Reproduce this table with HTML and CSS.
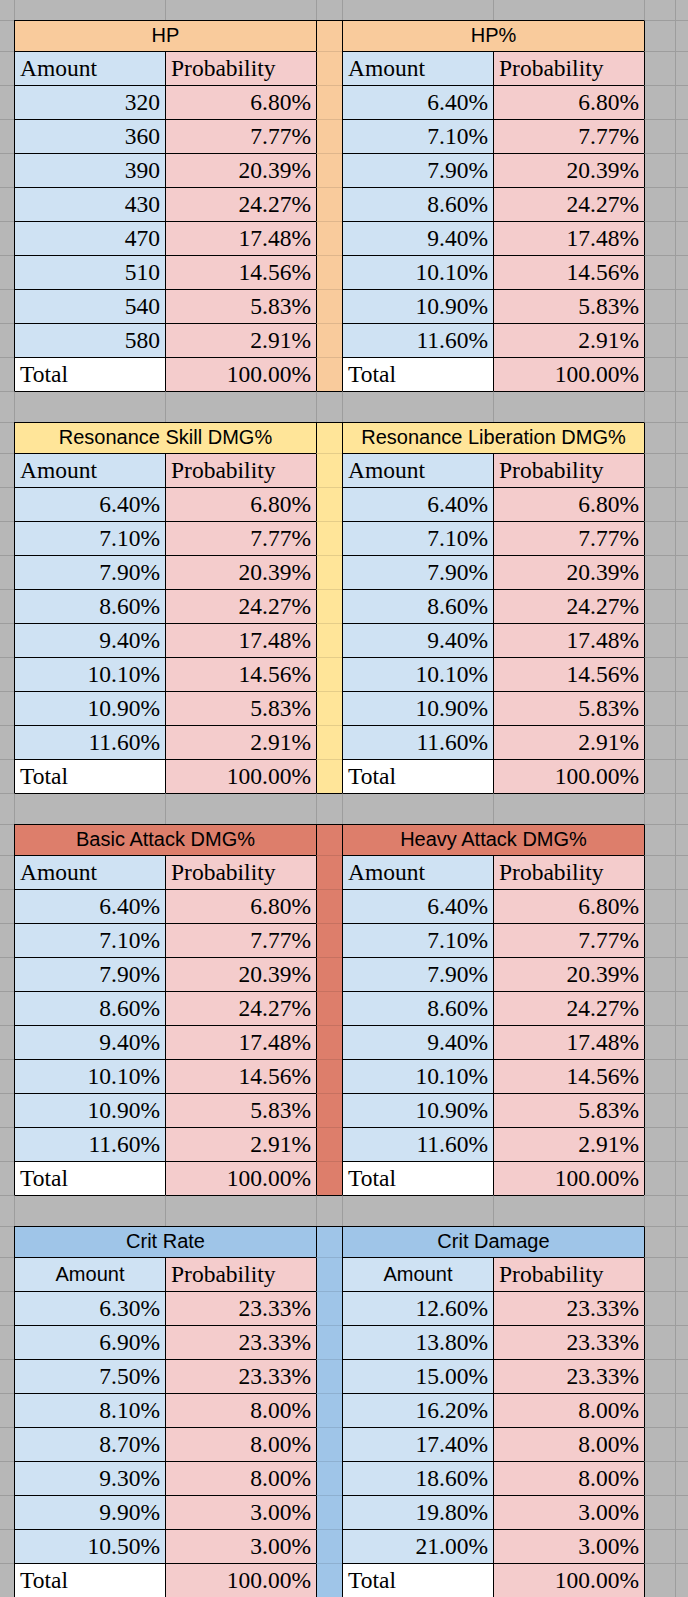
FILE: index.html
```html
<!DOCTYPE html>
<html lang="en">
<head>
<meta charset="utf-8">
<title>Echo substat probabilities</title>
<link rel="stylesheet" href="styles.css">
</head>
<body>
<div class="sheet">
  <div class="row top"><div class="c ca"></div><div class="c cb"></div><div class="c cc"></div><div class="c cd"></div><div class="c ce"></div><div class="c cf"></div><div class="c cg"></div><div class="c ch"></div></div>

  <!-- Block 1 -->
  <div class="block orange">
    <div class="row hd"><div class="c ca"></div><div class="c span t hdc">HP</div><div class="c cd sep"></div><div class="c span t hdc">HP%</div><div class="c cg edge"></div><div class="c ch"></div></div>
    <div class="row"><div class="c ca"></div><div class="c cb t am s">Amount</div><div class="c cc t pr s">Probability</div><div class="c cd sep"></div><div class="c ce t am s">Amount</div><div class="c cf t pr s">Probability</div><div class="c cg edge"></div><div class="c ch"></div></div>
    <div class="row"><div class="c ca"></div><div class="c cb t am n">320</div><div class="c cc t pr n">6.80%</div><div class="c cd sep"></div><div class="c ce t am n">6.40%</div><div class="c cf t pr n">6.80%</div><div class="c cg edge"></div><div class="c ch"></div></div>
    <div class="row"><div class="c ca"></div><div class="c cb t am n">360</div><div class="c cc t pr n">7.77%</div><div class="c cd sep"></div><div class="c ce t am n">7.10%</div><div class="c cf t pr n">7.77%</div><div class="c cg edge"></div><div class="c ch"></div></div>
    <div class="row"><div class="c ca"></div><div class="c cb t am n">390</div><div class="c cc t pr n">20.39%</div><div class="c cd sep"></div><div class="c ce t am n">7.90%</div><div class="c cf t pr n">20.39%</div><div class="c cg edge"></div><div class="c ch"></div></div>
    <div class="row"><div class="c ca"></div><div class="c cb t am n">430</div><div class="c cc t pr n">24.27%</div><div class="c cd sep"></div><div class="c ce t am n">8.60%</div><div class="c cf t pr n">24.27%</div><div class="c cg edge"></div><div class="c ch"></div></div>
    <div class="row"><div class="c ca"></div><div class="c cb t am n">470</div><div class="c cc t pr n">17.48%</div><div class="c cd sep"></div><div class="c ce t am n">9.40%</div><div class="c cf t pr n">17.48%</div><div class="c cg edge"></div><div class="c ch"></div></div>
    <div class="row"><div class="c ca"></div><div class="c cb t am n">510</div><div class="c cc t pr n">14.56%</div><div class="c cd sep"></div><div class="c ce t am n">10.10%</div><div class="c cf t pr n">14.56%</div><div class="c cg edge"></div><div class="c ch"></div></div>
    <div class="row"><div class="c ca"></div><div class="c cb t am n">540</div><div class="c cc t pr n">5.83%</div><div class="c cd sep"></div><div class="c ce t am n">10.90%</div><div class="c cf t pr n">5.83%</div><div class="c cg edge"></div><div class="c ch"></div></div>
    <div class="row"><div class="c ca"></div><div class="c cb t am n">580</div><div class="c cc t pr n">2.91%</div><div class="c cd sep"></div><div class="c ce t am n">11.60%</div><div class="c cf t pr n">2.91%</div><div class="c cg edge"></div><div class="c ch"></div></div>
    <div class="row"><div class="c ca"></div><div class="c cb t wh s">Total</div><div class="c cc t pr n">100.00%</div><div class="c cd sep"></div><div class="c ce t wh s">Total</div><div class="c cf t pr n">100.00%</div><div class="c cg edge"></div><div class="c ch"></div></div>
    <div class="row gap"><div class="c ca"></div><div class="c cb cl"></div><div class="c cc cl"></div><div class="c cd cl"></div><div class="c ce cl"></div><div class="c cf cl"></div><div class="c cg"></div><div class="c ch"></div></div>
  </div>

  <!-- Block 2 -->
  <div class="block yellow">
    <div class="row hd"><div class="c ca"></div><div class="c span t hdc">Resonance Skill DMG%</div><div class="c cd sep"></div><div class="c span t hdc">Resonance Liberation DMG%</div><div class="c cg edge"></div><div class="c ch"></div></div>
    <div class="row"><div class="c ca"></div><div class="c cb t am s">Amount</div><div class="c cc t pr s">Probability</div><div class="c cd sep"></div><div class="c ce t am s">Amount</div><div class="c cf t pr s">Probability</div><div class="c cg edge"></div><div class="c ch"></div></div>
    <div class="row"><div class="c ca"></div><div class="c cb t am n">6.40%</div><div class="c cc t pr n">6.80%</div><div class="c cd sep"></div><div class="c ce t am n">6.40%</div><div class="c cf t pr n">6.80%</div><div class="c cg edge"></div><div class="c ch"></div></div>
    <div class="row"><div class="c ca"></div><div class="c cb t am n">7.10%</div><div class="c cc t pr n">7.77%</div><div class="c cd sep"></div><div class="c ce t am n">7.10%</div><div class="c cf t pr n">7.77%</div><div class="c cg edge"></div><div class="c ch"></div></div>
    <div class="row"><div class="c ca"></div><div class="c cb t am n">7.90%</div><div class="c cc t pr n">20.39%</div><div class="c cd sep"></div><div class="c ce t am n">7.90%</div><div class="c cf t pr n">20.39%</div><div class="c cg edge"></div><div class="c ch"></div></div>
    <div class="row"><div class="c ca"></div><div class="c cb t am n">8.60%</div><div class="c cc t pr n">24.27%</div><div class="c cd sep"></div><div class="c ce t am n">8.60%</div><div class="c cf t pr n">24.27%</div><div class="c cg edge"></div><div class="c ch"></div></div>
    <div class="row"><div class="c ca"></div><div class="c cb t am n">9.40%</div><div class="c cc t pr n">17.48%</div><div class="c cd sep"></div><div class="c ce t am n">9.40%</div><div class="c cf t pr n">17.48%</div><div class="c cg edge"></div><div class="c ch"></div></div>
    <div class="row"><div class="c ca"></div><div class="c cb t am n">10.10%</div><div class="c cc t pr n">14.56%</div><div class="c cd sep"></div><div class="c ce t am n">10.10%</div><div class="c cf t pr n">14.56%</div><div class="c cg edge"></div><div class="c ch"></div></div>
    <div class="row"><div class="c ca"></div><div class="c cb t am n">10.90%</div><div class="c cc t pr n">5.83%</div><div class="c cd sep"></div><div class="c ce t am n">10.90%</div><div class="c cf t pr n">5.83%</div><div class="c cg edge"></div><div class="c ch"></div></div>
    <div class="row"><div class="c ca"></div><div class="c cb t am n">11.60%</div><div class="c cc t pr n">2.91%</div><div class="c cd sep"></div><div class="c ce t am n">11.60%</div><div class="c cf t pr n">2.91%</div><div class="c cg edge"></div><div class="c ch"></div></div>
    <div class="row"><div class="c ca"></div><div class="c cb t wh s">Total</div><div class="c cc t pr n">100.00%</div><div class="c cd sep"></div><div class="c ce t wh s">Total</div><div class="c cf t pr n">100.00%</div><div class="c cg edge"></div><div class="c ch"></div></div>
    <div class="row gap"><div class="c ca"></div><div class="c cb cl"></div><div class="c cc cl"></div><div class="c cd cl"></div><div class="c ce cl"></div><div class="c cf cl"></div><div class="c cg"></div><div class="c ch"></div></div>
  </div>

  <!-- Block 3 -->
  <div class="block red">
    <div class="row hd"><div class="c ca"></div><div class="c span t hdc">Basic Attack DMG%</div><div class="c cd sep"></div><div class="c span t hdc">Heavy Attack DMG%</div><div class="c cg edge"></div><div class="c ch"></div></div>
    <div class="row"><div class="c ca"></div><div class="c cb t am s">Amount</div><div class="c cc t pr s">Probability</div><div class="c cd sep"></div><div class="c ce t am s">Amount</div><div class="c cf t pr s">Probability</div><div class="c cg edge"></div><div class="c ch"></div></div>
    <div class="row"><div class="c ca"></div><div class="c cb t am n">6.40%</div><div class="c cc t pr n">6.80%</div><div class="c cd sep"></div><div class="c ce t am n">6.40%</div><div class="c cf t pr n">6.80%</div><div class="c cg edge"></div><div class="c ch"></div></div>
    <div class="row"><div class="c ca"></div><div class="c cb t am n">7.10%</div><div class="c cc t pr n">7.77%</div><div class="c cd sep"></div><div class="c ce t am n">7.10%</div><div class="c cf t pr n">7.77%</div><div class="c cg edge"></div><div class="c ch"></div></div>
    <div class="row"><div class="c ca"></div><div class="c cb t am n">7.90%</div><div class="c cc t pr n">20.39%</div><div class="c cd sep"></div><div class="c ce t am n">7.90%</div><div class="c cf t pr n">20.39%</div><div class="c cg edge"></div><div class="c ch"></div></div>
    <div class="row"><div class="c ca"></div><div class="c cb t am n">8.60%</div><div class="c cc t pr n">24.27%</div><div class="c cd sep"></div><div class="c ce t am n">8.60%</div><div class="c cf t pr n">24.27%</div><div class="c cg edge"></div><div class="c ch"></div></div>
    <div class="row"><div class="c ca"></div><div class="c cb t am n">9.40%</div><div class="c cc t pr n">17.48%</div><div class="c cd sep"></div><div class="c ce t am n">9.40%</div><div class="c cf t pr n">17.48%</div><div class="c cg edge"></div><div class="c ch"></div></div>
    <div class="row"><div class="c ca"></div><div class="c cb t am n">10.10%</div><div class="c cc t pr n">14.56%</div><div class="c cd sep"></div><div class="c ce t am n">10.10%</div><div class="c cf t pr n">14.56%</div><div class="c cg edge"></div><div class="c ch"></div></div>
    <div class="row"><div class="c ca"></div><div class="c cb t am n">10.90%</div><div class="c cc t pr n">5.83%</div><div class="c cd sep"></div><div class="c ce t am n">10.90%</div><div class="c cf t pr n">5.83%</div><div class="c cg edge"></div><div class="c ch"></div></div>
    <div class="row"><div class="c ca"></div><div class="c cb t am n">11.60%</div><div class="c cc t pr n">2.91%</div><div class="c cd sep"></div><div class="c ce t am n">11.60%</div><div class="c cf t pr n">2.91%</div><div class="c cg edge"></div><div class="c ch"></div></div>
    <div class="row"><div class="c ca"></div><div class="c cb t wh s">Total</div><div class="c cc t pr n">100.00%</div><div class="c cd sep"></div><div class="c ce t wh s">Total</div><div class="c cf t pr n">100.00%</div><div class="c cg edge"></div><div class="c ch"></div></div>
    <div class="row gap"><div class="c ca"></div><div class="c cb cl"></div><div class="c cc cl"></div><div class="c cd cl"></div><div class="c ce cl"></div><div class="c cf cl"></div><div class="c cg"></div><div class="c ch"></div></div>
  </div>

  <!-- Block 4 -->
  <div class="block blue">
    <div class="row hd"><div class="c ca"></div><div class="c span t hdc">Crit Rate</div><div class="c cd sep"></div><div class="c span t hdc">Crit Damage</div><div class="c cg edge"></div><div class="c ch"></div></div>
    <div class="row"><div class="c ca"></div><div class="c cb t am sc">Amount</div><div class="c cc t pr s">Probability</div><div class="c cd sep"></div><div class="c ce t am sc">Amount</div><div class="c cf t pr s">Probability</div><div class="c cg edge"></div><div class="c ch"></div></div>
    <div class="row"><div class="c ca"></div><div class="c cb t am n">6.30%</div><div class="c cc t pr n">23.33%</div><div class="c cd sep"></div><div class="c ce t am n">12.60%</div><div class="c cf t pr n">23.33%</div><div class="c cg edge"></div><div class="c ch"></div></div>
    <div class="row"><div class="c ca"></div><div class="c cb t am n">6.90%</div><div class="c cc t pr n">23.33%</div><div class="c cd sep"></div><div class="c ce t am n">13.80%</div><div class="c cf t pr n">23.33%</div><div class="c cg edge"></div><div class="c ch"></div></div>
    <div class="row"><div class="c ca"></div><div class="c cb t am n">7.50%</div><div class="c cc t pr n">23.33%</div><div class="c cd sep"></div><div class="c ce t am n">15.00%</div><div class="c cf t pr n">23.33%</div><div class="c cg edge"></div><div class="c ch"></div></div>
    <div class="row"><div class="c ca"></div><div class="c cb t am n">8.10%</div><div class="c cc t pr n">8.00%</div><div class="c cd sep"></div><div class="c ce t am n">16.20%</div><div class="c cf t pr n">8.00%</div><div class="c cg edge"></div><div class="c ch"></div></div>
    <div class="row"><div class="c ca"></div><div class="c cb t am n">8.70%</div><div class="c cc t pr n">8.00%</div><div class="c cd sep"></div><div class="c ce t am n">17.40%</div><div class="c cf t pr n">8.00%</div><div class="c cg edge"></div><div class="c ch"></div></div>
    <div class="row"><div class="c ca"></div><div class="c cb t am n">9.30%</div><div class="c cc t pr n">8.00%</div><div class="c cd sep"></div><div class="c ce t am n">18.60%</div><div class="c cf t pr n">8.00%</div><div class="c cg edge"></div><div class="c ch"></div></div>
    <div class="row"><div class="c ca"></div><div class="c cb t am n">9.90%</div><div class="c cc t pr n">3.00%</div><div class="c cd sep"></div><div class="c ce t am n">19.80%</div><div class="c cf t pr n">3.00%</div><div class="c cg edge"></div><div class="c ch"></div></div>
    <div class="row"><div class="c ca"></div><div class="c cb t am n">10.50%</div><div class="c cc t pr n">3.00%</div><div class="c cd sep"></div><div class="c ce t am n">21.00%</div><div class="c cf t pr n">3.00%</div><div class="c cg edge"></div><div class="c ch"></div></div>
    <div class="row"><div class="c ca"></div><div class="c cb t wh s">Total</div><div class="c cc t pr n">100.00%</div><div class="c cd sep"></div><div class="c ce t wh s">Total</div><div class="c cf t pr n">100.00%</div><div class="c cg edge"></div><div class="c ch"></div></div>
  </div>
</div>
</body>
</html>
```

FILE: styles.css
```css
* {
  box-sizing: border-box;
}

html, body {
  margin: 0;
  padding: 0;
}

body {
  width: 688px;
  background: #b7b7b7;
  overflow: hidden;
  color: #000;
}

.sheet {
  display: flex;
  flex-direction: column;
}

.block {
  display: flex;
  flex-direction: column;
}

.orange { --hd: #f9cb9c; }
.yellow { --hd: #ffe599; }
.red    { --hd: #dd7e6b; }
.blue   { --hd: #9fc5e8; }

.row {
  display: flex;
  height: 34px;
}

.row.top { height: 20px; }
.row.hd,
.row.gap { height: 31px; }

/* generic sheet cell: grid lines on left and top */
.c {
  flex: none;
  height: 100%;
  background: #b7b7b7;
  border-left: 1px solid #9d9d9d;
  border-top: 1px solid #9d9d9d;
  overflow: hidden;
  white-space: nowrap;
}

.top .c { border-top: none; }

.ca { width: 14px; border-left: none; }
.cb, .cc, .ce, .cf { width: 151px; }
.cd { width: 26px; }
.cg { width: 31px; }
.ch { flex: 1 1 auto; }
.span { width: 302px; }

/* table cells */
.t {
  border-left-color: #000;
  border-top-color: #000;
}

.am { background: #cfe2f3; }
.pr { background: #f4cccc; }
.wh { background: #ffffff; }

.hdc {
  background: var(--hd);
  font-family: "Liberation Sans", Arial, sans-serif;
  font-size: 20px;
  line-height: 29px;
  text-align: center;
}

.sep {
  background: var(--hd);
  border-left-color: #000;
  border-top-color: rgba(0, 0, 0, 0.1);
}

.hd .sep { border-top-color: #000; }

.edge { border-left-color: #000; }

.cl { border-top-color: #000; }

.s,
.n {
  font-family: "Liberation Serif", "Times New Roman", serif;
  font-size: 23.5px;
  line-height: 33px;
}

.s { padding-left: 5px; }

.n {
  text-align: right;
  padding-right: 5px;
}

.sc {
  font-family: "Liberation Sans", Arial, sans-serif;
  font-size: 20px;
  line-height: 33px;
  text-align: center;
}
```
